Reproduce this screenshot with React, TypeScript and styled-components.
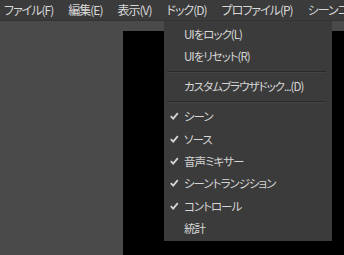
import styled, { createGlobalStyle } from "styled-components";

const GlobalStyle = createGlobalStyle`
  html, body {
    margin: 0;
    padding: 0;
    background: #4a4a4a;
  }
  * {
    box-sizing: border-box;
  }
`;

const Window = styled.div`
  position: relative;
  width: 344px;
  height: 255px;
  overflow: hidden;
  display: flex;
  flex-direction: column;
  background: #4a4a4a;
  font-family: "Noto Sans CJK JP", "Noto Sans", sans-serif;
  font-feature-settings: "palt";
  color: #d6d6d6;
`;

//=============================== MenuBar ========================================
const MenuBar = styled.div`
  display: flex;
  align-items: center;
  height: 21px;
  flex-shrink: 0;
  padding-left: 4px;
  gap: 15px;
  background: #3b3b3b;
  border-bottom: 1px solid #333333;
  white-space: nowrap;
  overflow: hidden;
`;

const MenuTitle = styled.span`
  font-size: 12px;
  line-height: 20px;
  letter-spacing: -1px;
  color: #d8d8d8;
`;

//=============================== Content ========================================
const Body = styled.div`
  flex: 1;
  display: flex;
  padding-top: 10px;
`;

const SidePanel = styled.div`
  width: 123px;
  flex-shrink: 0;
`;

const Preview = styled.div`
  flex: 1;
  background: #000000;
`;

//=============================== Dropdown =======================================
const Dropdown = styled.div`
  position: absolute;
  left: 164px;
  top: 21px;
  width: 168px;
  height: 220px;
  padding: 2px 0;
  background: #3b3b3b;
  display: flex;
  flex-direction: column;
`;

const Item = styled.div`
  display: flex;
  align-items: center;
  height: 22.3px;
  padding-left: 6px;
  font-size: 11.5px;
  letter-spacing: -1px;
  color: #d6d6d6;
  white-space: nowrap;
`;

const CheckSlot = styled.span`
  width: 14px;
  display: flex;
  align-items: center;
`;

const Separator = styled.div`
  height: 7.7px;
  display: flex;
  align-items: center;
  padding: 0 6px 0 3px;
  &::after {
    content: "";
    flex: 1;
    height: 1px;
    background: #2a2a2a;
    box-shadow: 0 1px 0 #444444;
  }
`;

function Check() {
  return (
    <svg width="9" height="8" viewBox="0 0 9 8">
      <path
        d="M0.8 4.2 L3.2 6.6 L7.8 1.2"
        fill="none"
        stroke="#d6d6d6"
        strokeWidth="1.8"
      />
    </svg>
  );
}

const menus = [
  "ファイル(F)",
  "編集(E)",
  "表示(V)",
  "ドック(D)",
  "プロファイル(P)",
  "シーンコレクション(S)",
];

type Entry = { label: string; checked?: boolean } | "sep";

const entries: Entry[] = [
  { label: "UIをロック(L)" },
  { label: "UIをリセット(R)" },
  "sep",
  { label: "カスタムブラウザドック...(D)" },
  "sep",
  { label: "シーン", checked: true },
  { label: "ソース", checked: true },
  { label: "音声ミキサー", checked: true },
  { label: "シーントランジション", checked: true },
  { label: "コントロール", checked: true },
  { label: "統計" },
];

export default function App() {
  return (
    <>
      <GlobalStyle />
      <Window>
        <MenuBar>
          {menus.map((m) => (
            <MenuTitle key={m}>{m}</MenuTitle>
          ))}
        </MenuBar>
        <Body>
          <SidePanel />
          <Preview />
        </Body>
        <Dropdown>
          {entries.map((e, i) =>
            e === "sep" ? (
              <Separator key={i} />
            ) : (
              <Item key={i}>
                <CheckSlot>{e.checked && <Check />}</CheckSlot>
                {e.label}
              </Item>
            )
          )}
        </Dropdown>
      </Window>
    </>
  );
}
